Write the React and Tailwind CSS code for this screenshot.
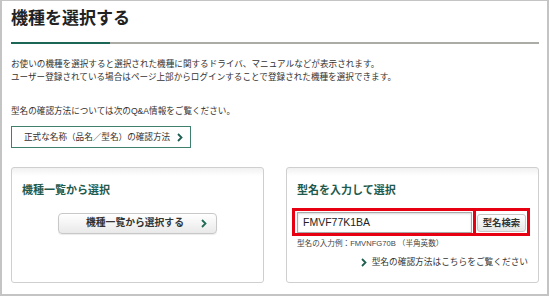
import React from "react";

const font = { fontFamily: "'Liberation Sans', 'Noto Sans CJK JP', sans-serif" };

function Chevron({ className = "" }) {
  return (
    <svg width="6" height="9" viewBox="0 0 6 9" className={className}>
      <polyline points="1,1 4.5,4.5 1,8" fill="none" stroke="currentColor" strokeWidth="1.8" />
    </svg>
  );
}

export default function App() {
  return (
    <div className="w-[550px] h-[296px] bg-white overflow-hidden text-[#333]" style={font}>
      <div className="w-[549px] h-[296px] border-2 border-t border-[#c4c4c4] pl-[9px] pr-[8px]">
        {/* TITLE */}
        <h1 className="mt-[6px] h-[24px] leading-[24px] text-[17px] font-bold text-[#222]">
          機種を選択する
        </h1>
        <div className="mt-[11px] h-[2px] bg-[#abaca5] w-[528px]">
          <div className="h-[2px] w-[99px] bg-[#1b6655]" />
        </div>

        {/* INTRO */}
        <div className="mt-[14px] text-[8.6px] leading-[13.4px] tracking-[0px]">
          <p>お使いの機種を選択すると選択された機種に関するドライバ、マニュアルなどが表示されます。</p>
          <p>ユーザー登録されている場合はページ上部からログインすることで登録された機種を選択できます。</p>
        </div>
        <p className="mt-[20px] text-[8.6px] leading-[13.4px]">
          型名の確認方法については次のQ&amp;A情報をご覧ください。
        </p>
        <button className="mt-[8px] w-[180px] h-[22px] border border-[#3f7f6d] flex items-center pl-[12px] pr-[7px] bg-white">
          <span className="text-[8.6px] text-[#333]">正式な名称（品名／型名）の確認方法</span>
          <Chevron className="ml-auto text-[#1f5f52]" />
        </button>

        {/* PANELS */}
        <div className="mt-[19px] flex gap-[22px]">
          {/* LIST */}
          <div className="w-[253px] h-[116px] border border-[#cfcfcf] rounded-[3px] bg-[linear-gradient(#f1f1f1,#ffffff_8px)]">
            <h2 className="mt-[14px] ml-[10px] h-[16px] leading-[16px] text-[11px] font-bold text-[#1e5a4d]">
              機種一覧から選択
            </h2>
            <div className="mt-[15px] flex justify-center">
              <button className="w-[159px] h-[21px] rounded-[4px] border border-[#c8c8c8] bg-[linear-gradient(#ffffff,#e9e9e9)] shadow-[0_1px_1px_rgba(0,0,0,0.08)] flex items-center pl-[27px] pr-[9px]">
                <span className="text-[9.8px] font-bold text-[#333]">機種一覧から選択する</span>
                <Chevron className="ml-auto text-[#1f6b57]" />
              </button>
            </div>
          </div>

          {/* MODEL SEARCH */}
          <div className="w-[253px] h-[116px] border border-[#cfcfcf] rounded-[3px] bg-[linear-gradient(#f1f1f1,#ffffff_8px)]">
            <h2 className="mt-[14px] ml-[10px] h-[16px] leading-[16px] text-[11px] font-bold text-[#1e5a4d]">
              型名を入力して選択
            </h2>
            <div className="mt-[10px] ml-[5px] w-[238px] h-[28px] border-[3px] border-[#e60012] flex">
              <div className="pl-[2px] pt-[1px] pr-[1px]">
                <div className="w-[175px] h-[21px] border border-[#a9a9a9] shadow-[inset_0_1px_2px_rgba(0,0,0,0.15)] flex items-center pl-[5px] bg-white">
                  <span className="text-[10.5px] text-[#222]">FMVF77K1BA</span>
                </div>
              </div>
              <div className="w-[3px] bg-[#e60012]" />
              <div className="flex items-center pl-[1px] pt-[1px]">
                <button className="w-[49px] h-[18px] rounded-[3px] border border-[#c8c8c8] bg-[linear-gradient(#ffffff,#e6e6e6)] text-[9.4px] font-bold text-[#333] leading-[16px]">
                  型名検索
                </button>
              </div>
            </div>
            <p className="mt-[2px] ml-[10px] text-[7.6px] leading-[12px] text-[#444]">
              型名の入力例：FMVNFG70B （半角英数）
            </p>
            <div className="mt-[6px] pr-[10px] flex items-center justify-end">
              <Chevron className="text-[#1f5f52] mr-[5px]" />
              <span className="text-[8.7px] leading-[12px] text-[#333]">型名の確認方法はこちらをご覧ください</span>
            </div>
          </div>
        </div>
      </div>
    </div>
  );
}
